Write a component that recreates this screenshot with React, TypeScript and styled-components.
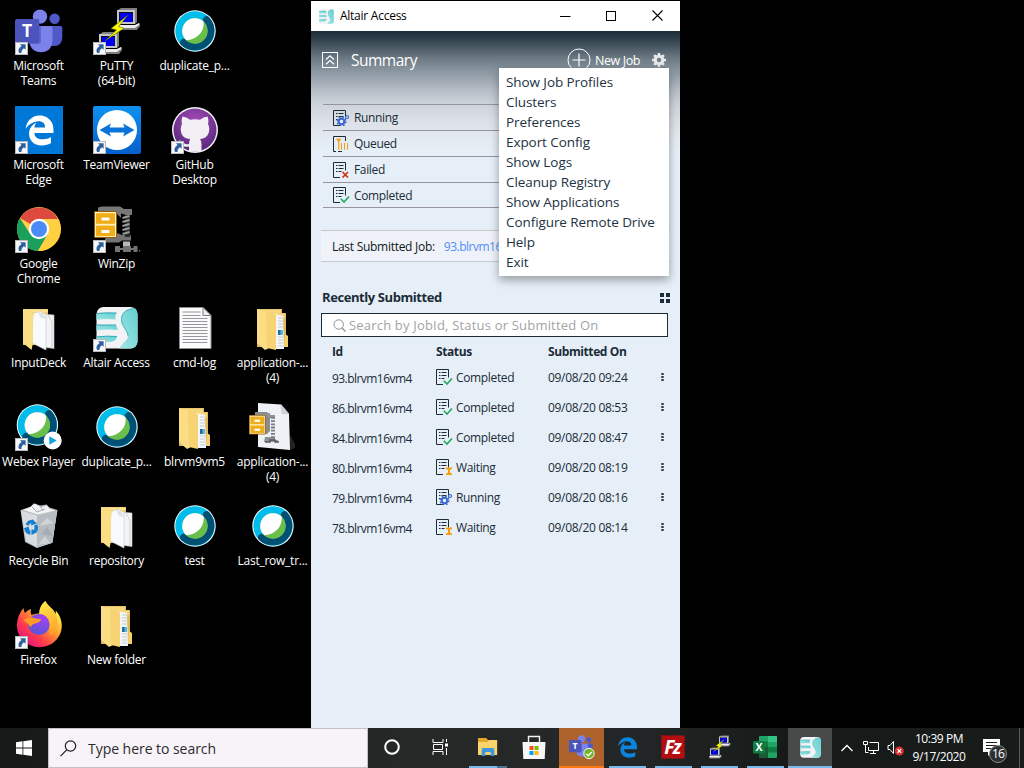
import React from 'react';
import styled, { createGlobalStyle, css } from 'styled-components';
import { FaEdgeLegacy } from 'react-icons/fa';

const GlobalStyle = createGlobalStyle`
  *, *::before, *::after { box-sizing: border-box; }
  html, body { margin: 0; padding: 0; background: #000; overflow: hidden; }
  body { font-family: "Open Sans", "Noto Sans", sans-serif; font-size: 12px; }
  svg { display: block; }
`;

/* ---------- Desktop ---------- */

const Screen = styled.div`
  width: 1024px;
  height: 768px;
  display: flex;
  flex-direction: column;
  background: #000;
  overflow: hidden;
`;

const Desktop = styled.main`
  position: relative;
  flex: 1;
  min-height: 0;
`;

const IconGrid = styled.div`
  display: grid;
  grid-template-columns: repeat(4, 78px);
  grid-auto-rows: 99px;
  padding-top: 7px;
`;

const Shortcut = styled.div<{ $col: number; $row: number }>`
  grid-column: ${(p) => p.$col};
  grid-row: ${(p) => p.$row};
  display: flex;
  flex-direction: column;
  align-items: center;
  color: #fff;
`;

const ShortcutPicture = styled.div`
  position: relative;
  width: 48px;
  height: 48px;
`;

const LinkBadge = styled.svg`
  position: absolute;
  left: 0;
  bottom: 0;
`;

const ShortcutLabel = styled.div`
  margin-top: 3px;
  padding-right: 1px;
  font-size: 12px;
  line-height: 15px;
  letter-spacing: -0.25px;
  text-align: center;
  white-space: pre;
`;

const ArrowBadge = () => (
  <LinkBadge width="13" height="13" viewBox="0 0 13 13">
    <rect x="0.5" y="0.5" width="12" height="12" fill="#f8f8fa" stroke="#b9b9bd" />
    <path d="M5 2.3h5.600v5.500L8.900 6.200C7.300 7.500 6.300 8.800 6.500 11H4.200C2.600 8.200 4 5.700 6.600 4z" fill="#2c5f9e" />
  </LinkBadge>
);

const TeamsLogo = ({ size = 48 }: { size?: number }) => (
  <svg width={size} height={size} viewBox="0 0 48 48">
    <circle cx="39.600" cy="11.700" r="5.200" fill="#5059c9" />
    <path d="M35 19h10.500q1.800 0 1.800 1.800V30c0 6-3.500 9-8 9h-4z" fill="#5059c9" />
    <circle cx="25" cy="9.600" r="7.200" fill="#7b83eb" />
    <path d="M14 19h21.500q2 0 2 2v12c0 8-5 12.300-11.500 12.300S14.500 41 14 33z" fill="#7b83eb" />
    <path d="M14 19h12v15q0 3-3 3h-8.600z" fill="#5f67cf" />
    <rect x="0" y="12" width="24.300" height="24.300" rx="2" fill="#4b53bc" />
    <text x="12.100" y="30.300" textAnchor="middle" fontFamily="Open Sans, sans-serif" fontWeight="700" fontSize="17.500" fill="#fff">T</text>
  </svg>
);

const PuttyLogo = ({ size = 48 }: { size?: number }) => {
  const computer = (
    <>
      <path d="M1 2L4 0H20V14L18 16H1z" fill="#808080" />
      <rect x="0" y="2" width="18" height="14" fill="#c6c6c6" />
      <rect x="2" y="4" width="14" height="10" fill="#101010" />
      <rect x="3" y="5" width="12.500" height="9" fill="#0000f0" />
      <path d="M-1 17h19l5-2v3l-3 4H-1z" fill="#7c7c7c" />
      <path d="M-1 17h19l4-2v2l-4 3H-1z" fill="#ececec" />
    </>
  );
  return (
    <svg width={size} height={size} viewBox="0 0 48 48">
      <g transform="translate(24 1)">{computer}</g>
      <g transform="translate(6 25)">{computer}</g>
      <path d="M34.500 8.500L18 21.500l5.500 1.500L12.500 33.500 31 21.300l-5.500-1.600z" fill="#ffff00" stroke="#6c6c00" strokeWidth="0.700" />
    </svg>
  );
};

const WebexMark = () => (
  <>
    <circle r="20.700" fill="#fff" />
    <circle r="16.200" fill="none" stroke="#00bceb" strokeWidth="7" />
    <path d="M11.500 -11.400A16.200 16.200 0 0 1 -11.500 11.400" fill="none" stroke="#005073" strokeWidth="7" strokeLinecap="round" />
    <circle r="12.700" fill="#6abf4b" />
    <path d="M8.700 -9.300A12.700 12.700 0 1 0 -8.700 9.300C2 8.500 9.500 1 8.700 -9.300z" fill="#fff" />
  </>
);

const WebexLogo = () => (
  <svg width="48" height="48" viewBox="0 0 48 48"><g transform="translate(24 24)"><WebexMark /></g></svg>
);

const WebexPlayerLogo = () => (
  <svg width="48" height="48" viewBox="0 0 48 48">
    <g transform="translate(22.400 22)"><WebexMark /></g>
    <circle cx="37.700" cy="37.500" r="9" fill="#fff" />
    <path d="M34.300 33.300l7.400 4.200-7.400 4.200z" fill="#0aa5e0" />
  </svg>
);

const EdgeTile = styled.div`
  width: 48px;
  height: 48px;
  display: flex;
  align-items: center;
  justify-content: center;
  background: #0078d7;
  color: #fff;
  font-size: 31px;
`;

const TeamViewerLogo = () => (
  <svg width="48" height="48" viewBox="0 0 48 48">
    <defs>
      <linearGradient id="tv" x1="0" y1="0" x2="0" y2="1"><stop offset="0" stopColor="#0d92f0" /><stop offset="1" stopColor="#0560cc" /></linearGradient>
    </defs>
    <rect width="48" height="48" rx="2" fill="url(#tv)" />
    <circle cx="24" cy="24" r="20" fill="#fff" />
    <path d="M6.500 24L18 17.500l-1.500 4h15L30 17.500 41.500 24 30 30.500l1.500-4h-15l1.500 4z" fill="#0a72d8" />
  </svg>
);

const GithubLogo = () => (
  <svg width="48" height="48" viewBox="0 0 48 48">
    <defs>
      <radialGradient id="gh" cx="0.500" cy="0.300" r="0.700"><stop offset="0" stopColor="#a34bb5" /><stop offset="1" stopColor="#57287d" /></radialGradient>
      <clipPath id="ghc"><circle cx="24" cy="24" r="21.800" /></clipPath>
    </defs>
    <circle cx="24" cy="24" r="23" fill="#f2eff5" />
    <circle cx="24" cy="24" r="21.500" fill="url(#gh)" />
    <path clipPath="url(#ghc)" d="M11.500 10.500q4 .5 7.500 3.200 5-1 10 0 3.500-2.700 7.500-3.200 1.500 4 .5 7.500 1.500 2.500 1.200 6c-.5 6-4 8.500-9.200 9q1.500 2 1.500 5V48H18v-7.500c-6 1-6.500-1.500-8-3.500q-1.500-1.500-2.500-2.300 3.500-1 5.500 2.300 1.800 2 5 1 0-3 1.200-5c-6-.5-9-3-9.400-9q-.3-3.500 1.200-6-1-3.500.5-7.500z" fill="#f1eff3" />
  </svg>
);

const ChromeLogo = () => (
  <svg width="48" height="48" viewBox="0 0 48 48">
    <circle cx="24" cy="24" r="22" fill="#ffd040" />
    <path d="M24 24L4.900 13A22 22 0 0 1 43.100 14H24z" fill="#de4b3e" />
    <path d="M4.900 13A22 22 0 0 0 23 46L33.500 28 24 24 14.500 28z" fill="#1a9f5c" />
    <path d="M24 14H43.100A22 22 0 0 1 23 46L33 29z" fill="#ffd040" />
    <circle cx="24" cy="24" r="10.200" fill="#fff" />
    <circle cx="24" cy="24" r="8" fill="#4a8bf5" />
  </svg>
);

const Cabinet = () => (
  <>
    <rect x="0" y="0" width="23" height="27" rx="1" fill="#8f5f0c" />
    <rect x="1" y="1" width="21" height="25" fill="#fff0c0" />
    <rect x="2" y="2.200" width="19" height="10.600" fill="#efad19" />
    <rect x="2" y="14.600" width="19" height="10.600" fill="#efad19" />
    <rect x="7.500" y="6.500" width="8" height="3" fill="#fff" />
    <rect x="7.500" y="19" width="8" height="3" fill="#fff" />
  </>
);

const WinZipLogo = () => (
  <svg width="48" height="48" viewBox="0 0 48 48">
    <path d="M5 2.500L9 1.500h18l4 2.500h8v6h-6l-5-1.500V13l-4-4H5z" fill="#777" />
    <path d="M24 28l5 2 9 .5v5h-9l-3 2H12v-4z" fill="#737373" />
    <path d="M32 10h5v22h-5z" fill="#2c2c2c" />
    <path d="M29.500 13l7-2M29.500 17l7-2M29.500 21l7-2M29.500 25l7-2M29.500 29l7-2" stroke="#9d9d9d" strokeWidth="2" />
    <rect x="30" y="36.500" width="7" height="4.500" fill="#b9b9b9" />
    <path d="M22 41h5v2h3v-2h8v2h2.500v-2h4v6h-4v-2H38v2h-8v-2h-3v2h-5zM46 45h1.200v1.500H46z" fill="#737373" />
    <g transform="translate(1 6)"><Cabinet /></g>
  </svg>
);

const WinZipFile = () => (
  <svg width="48" height="48" viewBox="0 0 48 48">
    <path d="M40 30l6 11q2 5-6 6z" fill="#222" />
    <path d="M9 0l23 1.500 8 9.500L41 47 9 44z" fill="#eef2f6" />
    <path d="M32 1.500l8 9.500-7-.5z" fill="#d0d5dc" stroke="#b4bac0" strokeWidth="0.500" />
    <path d="M6 9h12l3 3v16l-3 3H6z" fill="#8c8c8c" />
    <path d="M17 10h4v2h5v3h-6zM16 34h10v3h3v2H15z" fill="#8e9398" />
    <path d="M24 14v21" stroke="#777d83" strokeWidth="4" strokeDasharray="1.800 1.400" />
    <path d="M16 39h5v-2h5v2h4" stroke="#565b60" strokeWidth="1.500" fill="none" />
    <g transform="translate(0 12) scale(.72)"><Cabinet /></g>
  </svg>
);

const PaperFolder = () => (
  <svg width="48" height="48" viewBox="0 0 48 48">
    <path d="M8 5h25v36H8z" fill="#e6c565" />
    <path d="M8 5.500h24.500v3H20z" fill="#fbe190" />
    <path d="M26 10l13 1v33.500L27 43z" fill="#f2f3f5" stroke="#c8cacf" strokeWidth="0.600" />
    <path d="M18 9l8-1.500 5 3V46L17 39z" fill="#f9fafc" stroke="#c8cacf" strokeWidth="0.600" />
    <path d="M23 8l5 1 3 6-5-1z" fill="#dfe2e6" />
    <path d="M33 11l4 7v26" stroke="#b9bcc2" strokeWidth="0.600" fill="none" />
    <path d="M8 5l12 4q-2 2-2 5v25l-1.500 7L8 39z" fill="#fbdd84" />
  </svg>
);

const FilesFolder = () => (
  <svg width="48" height="48" viewBox="0 0 48 48">
    <path d="M8 5h25v4h4v34H8z" fill="#dfb95a" />
    <path d="M9 5.500h23v4h4v5H13z" fill="#f6d67d" />
    <path d="M25 10l9 2 1 33H26z" fill="#f3f6f9" />
    <path d="M29 14h5M29 17h5M29 20h5M29 23h5M29 33h5M29 36h5M29 39h5M29 42h5" stroke="#c3cbd2" strokeWidth="1" />
    <path d="M29 26h5v5h-5z" fill="#5db6e0" />
    <path d="M29 26h2.500v5H29z" fill="#226d9c" />
    <path d="M8 5l12 4v35l-4 2-8-7z" fill="#fbdd84" />
    <path d="M17 8l10 3v35l-9-2z" fill="#f7d374" />
    <path d="M36 30l3 2v11h-4z" fill="#f3cf6d" />
  </svg>
);

const AltairLogo = ({ size = 48, uid }: { size?: number; uid: string }) => (
  <svg width={size} height={size} viewBox={size < 48 ? '3 3 42 42' : '0 0 48 48'}>
    <defs>
      <linearGradient id={uid} x1="1" y1="0" x2="0" y2="1"><stop offset="0" stopColor="#5fcfd0" /><stop offset="1" stopColor="#a4e7e6" /></linearGradient>
      <clipPath id={`${uid}c`}><rect x="3.500" y="3" width="41" height="41.500" rx="7" /></clipPath>
    </defs>
    <g clipPath={`url(#${uid}c)`}>
      <rect x="3" y="3" width="42" height="42" fill="#f3f2f4" />
      <path d="M3 9.500q10-1 20.500-.5-2 3-1 6.500-9-1-19.500.5z" fill={`url(#${uid})`} />
      <path d="M3 21h20q1 2.500 2 5-10-1-22 .5z" fill={`url(#${uid})`} />
      <path d="M3 33q12-1.500 21-.5-1 4.500-6 5.500-7-.5-15 1z" fill={`url(#${uid})`} />
      <path d="M3 9.500q10-1 20.500-.5M3 21h20M3 33q12-1.500 21-.5" stroke="#31a9b6" strokeWidth="1" fill="none" />
      <path d="M45 4c-12 0-16.500 5-16.500 11.500 0 7 6.500 11 6.500 16.500 0 5-6 6.500-9 13H45z" fill={`url(#${uid})`} />
      <path d="M41 4.500c-9 1-12.500 5-12.500 11 0 7 6.500 11 6.500 16.500" fill="none" stroke="#38aab5" strokeWidth="0.900" />
    </g>
  </svg>
);

const TextFile = () => (
  <svg width="48" height="48" viewBox="0 0 48 48">
    <path d="M8.500 3.500h23.500l8 8v33h-31.500z" fill="#fbfbfc" stroke="#8e8e92" strokeWidth="1" />
    <path d="M32 3.500v8h8z" fill="#eee" stroke="#7e7e84" strokeWidth="1" />
    <path d="M11.500 8h18M11.500 11.500h18M11.500 14.500h25M11.500 17.500h25M11.500 20.500h25M11.500 23.500h25M11.500 26.500h25M11.500 29.500h25M11.500 32.500h25M11.500 35.500h25M11.500 38.500h25" stroke="#96989d" strokeWidth="1" />
  </svg>
);

const RecycleBin = () => (
  <svg width="48" height="48" viewBox="0 0 48 48">
    <path d="M5.500 8l10-3 3-3.500 7 2 6-1 3 3 8 2.500-5.500 33-15 5-12-6z" fill="#b4b9bf" />
    <path d="M6 8.500l16 5 20-5-4.500 32-15.500 5L11 39z" fill="#d9dde1" />
    <path d="M22 13.500l20-5-4.500 32-15.500 5z" fill="#b7bcc2" />
    <path d="M8 8l8-3.500 4-3 6 4 6-2 2 3 6 2-17 4z" fill="#f2f3f5" />
    <path d="M17 5l5 5 8-3M26 5l2 4" stroke="#a6abb1" strokeWidth="1" fill="none" />
    <path d="M24 24l8-8 7 5zM23 43l7-9 5 7z" fill="#cfd3d7" />
    <path d="M26 32l6-7 6 9z" fill="#a7adb3" />
    <g fill="none" stroke="#1680cf" strokeWidth="3.400">
      <path d="M12 23q2.500-4.500 6-3" /><path d="M20.500 23q2 4-1 6.500" /><path d="M15.500 31q-4-.5-4.500-4.500" />
    </g>
    <path d="M17 17l5 4.500-6 2zM22.500 30l-6 3v-6zM8.500 26.500l5-2 1.500 5z" fill="#1680cf" />
  </svg>
);

const FirefoxLogo = () => (
  <svg width="48" height="48" viewBox="0 0 48 48">
    <defs>
      <linearGradient id="ff" x1="0.900" y1="0.100" x2="0.200" y2="0.900"><stop offset="0.100" stopColor="#fff04a" /><stop offset="0.450" stopColor="#ff9a2e" /><stop offset="0.750" stopColor="#ff3c4c" /><stop offset="1" stopColor="#e5177b" /></linearGradient>
      <linearGradient id="fy" x1="0" y1="0" x2="0.300" y2="1"><stop offset="0" stopColor="#fff14c" /><stop offset="1" stopColor="#ffa52b" /></linearGradient>
      <radialGradient id="fp" cx="0.700" cy="0.200" r="0.800"><stop offset="0" stopColor="#a640f0" /><stop offset="1" stopColor="#5b55d8" /></radialGradient>
    </defs>
    <path d="M30.500 0c1.500 5 8 7.500 10 13q.5-1.500.3-3.500c4 4.500 6 10 6 15C46.800 37 36.500 46.200 24.500 46.200S2 36.500 2 25c0-7 2-12.500 6.500-18q.2 3 1.500 5 2.500-3 6-4-1 3 .5 6 4-2 8-1.500 0-8 6-12.500z" fill="url(#ff)" />
    <path d="M30.500 0c1.500 5 8 7.500 10 13 4 8 1 18-6 21.500 2-9-2-15-10-20.500-1-6 2-11 6-14z" fill="url(#fy)" />
    <circle cx="24" cy="23.500" r="10.600" fill="url(#fp)" />
    <path d="M8 19q4-3 9-2.500 5 1.500 9 1.500 0 3-6 4.500-4 1-4 4-3-5-8-7.500z" fill="#ff9a25" />
  </svg>
);

interface DesktopItem { label: string; col: number; row: number; icon: React.ReactNode; link?: boolean }

const desktopItems: DesktopItem[] = [
  { label: 'Microsoft\nTeams', col: 1, row: 1, icon: <TeamsLogo />, link: true },
  { label: 'PuTTY\n(64-bit)', col: 2, row: 1, icon: <PuttyLogo />, link: true },
  { label: 'duplicate_p...', col: 3, row: 1, icon: <WebexLogo /> },
  { label: 'Microsoft\nEdge', col: 1, row: 2, icon: <EdgeTile><FaEdgeLegacy /></EdgeTile>, link: true },
  { label: 'TeamViewer', col: 2, row: 2, icon: <TeamViewerLogo />, link: true },
  { label: 'GitHub\nDesktop', col: 3, row: 2, icon: <GithubLogo />, link: true },
  { label: 'Google\nChrome', col: 1, row: 3, icon: <ChromeLogo />, link: true },
  { label: 'WinZip', col: 2, row: 3, icon: <WinZipLogo />, link: true },
  { label: 'InputDeck', col: 1, row: 4, icon: <PaperFolder /> },
  { label: 'Altair Access', col: 2, row: 4, icon: <AltairLogo uid="altair-desktop" />, link: true },
  { label: 'cmd-log', col: 3, row: 4, icon: <TextFile /> },
  { label: 'application-...\n(4)', col: 4, row: 4, icon: <FilesFolder /> },
  { label: 'Webex Player', col: 1, row: 5, icon: <WebexPlayerLogo />, link: true },
  { label: 'duplicate_p...', col: 2, row: 5, icon: <WebexLogo /> },
  { label: 'blrvm9vm5', col: 3, row: 5, icon: <FilesFolder /> },
  { label: 'application-...\n(4)', col: 4, row: 5, icon: <WinZipFile /> },
  { label: 'Recycle Bin', col: 1, row: 6, icon: <RecycleBin /> },
  { label: 'repository', col: 2, row: 6, icon: <PaperFolder /> },
  { label: 'test', col: 3, row: 6, icon: <WebexLogo /> },
  { label: 'Last_row_tr...', col: 4, row: 6, icon: <WebexLogo /> },
  { label: 'Firefox', col: 1, row: 7, icon: <FirefoxLogo />, link: true },
  { label: 'New folder', col: 2, row: 7, icon: <FilesFolder /> },
];

/* ---------- Application window ---------- */

const AppWindow = styled.section`
  position: absolute;
  left: 311px;
  top: 1px;
  width: 369px;
  height: 727px;
  display: flex;
  flex-direction: column;
  background: #e6eff7;
  color: #1b2b38;
`;

const TitleBar = styled.header`
  height: 30px;
  flex: none;
  display: flex;
  align-items: center;
  padding-left: 8px;
  background: #fff;
  color: #000;
`;

const TitleText = styled.span`
  flex: 1;
  padding-left: 5px;
  font-size: 12px;
  line-height: 16px;
  letter-spacing: -0.25px;
`;

const WindowControl = styled.button`
  width: 46px;
  height: 30px;
  padding: 0 0 1px;
  border: 0;
  background: none;
  display: flex;
  align-items: center;
  justify-content: center;
`;

const SummaryPanel = styled.div`
  flex: none;
  height: 199px;
  padding: 0 11px 0 12px;
  background: linear-gradient(#1c2e39 0, #2c3d48 7px, #6b7983 27px, #8f9aa4 42px, #b1b9c2 57px, #ccd2d9 72px, #dadfe6 88px, #e3e8ef 102px, #e6eff7 120px);
`;

const SummaryBar = styled.div`
  height: 73px;
  display: flex;
  align-items: center;
  padding-bottom: 15px;
  padding-right: 3px;
  margin-left: -1px;
  color: #fff;
`;

const SummaryTitle = styled.h1`
  flex: 1;
  margin: -1px 0 0 13px;
  font-size: 15.5px;
  line-height: 20px;
  font-weight: 400;
  letter-spacing: -0.5px;
`;

const NewJob = styled.span`
  margin: 0 12px 0 4px;
  font-size: 12.500px;
  letter-spacing: -0.400px;
`;

const StatusList = styled.ul`
  margin: 0;
  padding: 0;
  list-style: none;
  border-bottom: 1px solid #97959c;
`;

const StatusRow = styled.li`
  height: 26px;
  display: flex;
  align-items: center;
  gap: 4px;
  padding-left: 10px;
  border-top: 1px solid #97959c;
  font-size: 12px;
  letter-spacing: -0.350px;
  &:last-child { height: 25px; }
`;

const LastJob = styled.div`
  flex: none;
  height: 32px;
  margin: 0 10px;
  padding: 0 11px;
  display: flex;
  align-items: center;
  gap: 9px;
  border: solid #c6c8cc;
  border-width: 1px 0;
  background: #eff2f8;
  color: #101820;
  letter-spacing: -0.280px;
`;

const JobLink = styled.a`
  color: #5090fb;
  letter-spacing: -0.5px;
`;

const RecentHeader = styled.div`
  flex: none;
  height: 51px;
  display: flex;
  align-items: flex-end;
  justify-content: space-between;
  padding: 0 10px 7px 11px;
`;

const RecentTitle = styled.h2`
  margin: 0;
  font-size: 13px;
  line-height: 18px;
  font-weight: 700;
  letter-spacing: -0.420px;
`;

const TileToggle = styled.span`
  display: grid;
  grid-template-columns: 4px 4px;
  grid-auto-rows: 4px;
  gap: 2px;
  margin-bottom: 3px;
  i { background: #1b2b38; }
`;

const SearchField = styled.div`
  flex: none;
  height: 24px;
  margin: 0 12px 0 10px;
  padding-left: 11px;
  display: flex;
  align-items: center;
  gap: 3px;
  border: 1px solid #1b2b38;
  background: #fff;
  color: #a3a3a5;
  font-size: 13px;
  letter-spacing: 0.190px;
`;

const JobTable = styled.div`
  flex: none;
`;

const rowColumns = css`
  display: grid;
  grid-template-columns: 104px 112px 108px 1fr;
  align-items: center;
  padding: 0 11px 0 21px;
`;

const JobTableHead = styled.div`
  ${rowColumns}
  height: 25px;
  padding-top: 4px;
  font-weight: 700;
  letter-spacing: -0.400px;
`;

const JobTableRow = styled.div`
  ${rowColumns}
  height: 30px;
`;

const JobId = styled.span`
  padding-top: 2px;
  letter-spacing: -0.550px;
`;

const JobStatus = styled.span`
  display: flex;
  align-items: center;
  gap: 3px;
  letter-spacing: -0.350px;
`;

const JobDate = styled.span`
  letter-spacing: -0.300px;
`;

const MoreDots = styled.span`
  width: 3px;
  display: grid;
  gap: 1px;
  justify-self: center;
  i { height: 2px; border-radius: 1px; background: #33414c; }
`;

const SettingsMenu = styled.ul`
  position: absolute;
  left: 188px;
  top: 67px;
  width: 170px;
  height: 208px;
  margin: 0;
  padding: 4px 0 0 7px;
  list-style: none;
  background: #fff;
  box-shadow: 0 4px 9px rgba(0, 0, 0, 0.350);
`;

const MenuItem = styled.li`
  height: 20px;
  line-height: 20px;
  font-size: 13.500px;
  letter-spacing: -0.080px;
  white-space: nowrap;
  color: #22323f;
`;

type Status = 'Running' | 'Queued' | 'Failed' | 'Completed' | 'Waiting';

const marks: Record<Status, React.ReactNode> = {
  Running: (
    <>
      <circle cx="8.500" cy="11.500" r="2.800" fill="#e6eff7" stroke="#3b68d0" strokeWidth="2" />
      <circle cx="8.500" cy="11.500" r="4.300" fill="none" stroke="#3b68d0" strokeWidth="1.500" strokeDasharray="1.700 1.680" />
      <circle cx="14" cy="7" r="1.500" fill="none" stroke="#3b68d0" strokeWidth="1.200" />
    </>
  ),
  Queued: (
    <path d="M3 2.800h5.500L6.300 5.500v8.200H5.200V5.500zM8 7h1v6.700H8zM11 7h1v6.700h-1zM14 7h1v6.700h-1z" fill="#f79a0c" />
  ),
  Failed: <path d="M9.500 10l5.500 5.500M15 10l-5.500 5.500" stroke="#cf2d0c" strokeWidth="1.600" fill="none" />,
  Completed: <path d="M7.800 11.800l3.200 3.200 5-5.500" stroke="#1da65c" strokeWidth="1.600" fill="none" />,
  Waiting: <path d="M10 8.500h6V10l-2 .8v3l2 .7V16h-6v-1.500l2-.7v-3l-2-.8z" fill="#f99b0c" />,
};

const StatusIcon = ({ status }: { status: Status }) => {
  const queued = status === 'Queued';
  return (
    <svg width="17" height="16" viewBox="0 0 17 16">
      <path d={queued ? 'M3 15.500H.5V.5h12V5M5 15.500h4' : 'M7 15.500H.5V.5h12V8.500'} stroke="#1b2b38" fill="none" />
      {!queued && <path d="M3 3.500h1.500M5.500 3.500h5M3 6.500h1.500M5.500 6.500h5M3 9.500h1.500M5.500 9.500h3" stroke="#1b2b38" />}
      {marks[status]}
    </svg>
  );
};

const summary: Status[] = ['Running', 'Queued', 'Failed', 'Completed'];

const jobs: { id: string; status: Status; date: string }[] = [
  { id: '93.blrvm16vm4', status: 'Completed', date: '09/08/20 09:24' },
  { id: '86.blrvm16vm4', status: 'Completed', date: '09/08/20 08:53' },
  { id: '84.blrvm16vm4', status: 'Completed', date: '09/08/20 08:47' },
  { id: '80.blrvm16vm4', status: 'Waiting', date: '09/08/20 08:19' },
  { id: '79.blrvm16vm4', status: 'Running', date: '09/08/20 08:16' },
  { id: '78.blrvm16vm4', status: 'Waiting', date: '09/08/20 08:14' },
];

const menuItems = [
  'Show Job Profiles', 'Clusters', 'Preferences', 'Export Config', 'Show Logs',
  'Cleanup Registry', 'Show Applications', 'Configure Remote Drive', 'Help', 'Exit',
];

const GearIcon = () => (
  <svg width="14" height="14" viewBox="-7 -7 14 14">
    <circle r="3.800" fill="none" stroke="#e6e8ea" strokeWidth="3.200" />
    {[0, 45, 90, 135].map((a) => (
      <path key={a} transform={`rotate(${a})`} d="M0 -7v3M0 4v3" stroke="#e6e8ea" strokeWidth="2.400" />
    ))}
  </svg>
);

const AltairAccess = () => (
  <AppWindow>
    <TitleBar>
      <AltairLogo size={15} uid="altair-title" />
      <TitleText>&#8202;Altair Access</TitleText>
      <WindowControl><svg width="11" height="10"><path d="M0 5.500h10.500" stroke="#000" /></svg></WindowControl>
      <WindowControl><svg width="10" height="10"><rect x="0.500" y="0.500" width="9" height="9" fill="none" stroke="#000" /></svg></WindowControl>
      <WindowControl><svg width="11" height="11"><path d="M.5.5l10 10M10.500.5l-10 10" stroke="#000" strokeWidth="1.100" /></svg></WindowControl>
    </TitleBar>
    <SummaryPanel>
      <SummaryBar>
        <svg width="16" height="16" viewBox="0 0 16 16">
          <rect x="0.500" y="0.500" width="15" height="15" fill="none" stroke="#fff" />
          <path d="M4 7.500l4-3.700 4 3.700M4 12.200l4-3.700 4 3.700" fill="none" stroke="#fff" strokeWidth="1.200" />
        </svg>
        <SummaryTitle>Summary</SummaryTitle>
        <svg width="24" height="24" viewBox="0 0 24 24">
          <circle cx="12" cy="12" r="11" fill="none" stroke="#fff" />
          <path d="M12 5.500v13M5.500 12h13" stroke="#fff" strokeWidth="1.200" />
        </svg>
        <NewJob>New Job</NewJob>
        <GearIcon />
      </SummaryBar>
      <StatusList>
        {summary.map((s) => (
          <StatusRow key={s}><StatusIcon status={s} />{s}</StatusRow>
        ))}
      </StatusList>
    </SummaryPanel>
    <LastJob>Last Submitted Job:<JobLink>93.blrvm16vm4</JobLink></LastJob>
    <RecentHeader>
      <RecentTitle>Recently Submitted</RecentTitle>
      <TileToggle><i /><i /><i /><i /></TileToggle>
    </RecentHeader>
    <SearchField>
      <svg width="13" height="13" viewBox="0 0 13 13" fill="none" stroke="#8f8f93">
        <circle cx="5.700" cy="5.500" r="4.700" /><path d="M9 9l3.500 3.500" strokeWidth="1.200" />
      </svg>
      Search by JobId, Status or Submitted On
    </SearchField>
    <JobTable>
      <JobTableHead><span>Id</span><span>Status</span><span>Submitted On</span></JobTableHead>
      {jobs.map((j) => (
        <JobTableRow key={j.id}>
          <JobId>{j.id}</JobId>
          <JobStatus><StatusIcon status={j.status} />{j.status}</JobStatus>
          <JobDate>{j.date}</JobDate>
          <MoreDots><i /><i /><i /></MoreDots>
        </JobTableRow>
      ))}
    </JobTable>
    <SettingsMenu>
      {menuItems.map((m) => <MenuItem key={m}>{m}</MenuItem>)}
    </SettingsMenu>
  </AppWindow>
);

/* ---------- Taskbar ---------- */

const Taskbar = styled.footer`
  flex: none;
  height: 40px;
  display: flex;
  background: linear-gradient(90deg, #151a19, #262928 42%, #232626 62%, #161b19 76%, #171b19);
  color: #fff;
`;

const StartButton = styled.div`
  width: 48px;
  display: flex;
  align-items: center;
  justify-content: center;
`;

const TaskSearch = styled.div`
  width: 320px;
  display: flex;
  align-items: center;
  gap: 11px;
  padding-left: 11px;
  border: 1px solid #c3c1c4;
  background: #f7f3f8;
  color: #2b2b2e;
  font-size: 14px;
  letter-spacing: -0.040px;
`;

const TaskSlot = styled.div<{ $w: number; $tile?: string }>`
  width: ${(p) => p.$w}px;
  height: 40px;
  display: grid;
  grid-template-rows: 38px 2px;
  align-items: center;
  justify-items: center;
  background: ${(p) => p.$tile ?? 'transparent'};
  font-size: 24px;
`;

const Underline = styled.span<{ $w: number; $color?: string }>`
  width: ${(p) => p.$w}px;
  height: 2px;
  background: ${(p) => p.$color ?? '#76b9ed'};
`;

const EdgeMark = styled(FaEdgeLegacy)`
  color: #0a84de;
  font-size: 21px;
  margin-top: 1px;
`;

const Tray = styled.div`
  flex: 1;
  display: flex;
  align-items: center;
  padding-left: 9px;
`;

const Clock = styled.div`
  width: 60px;
  margin: 0 14px 0 4px;
  text-align: center;
  font-size: 12px;
  line-height: 18px;
  letter-spacing: -0.450px;
  white-space: nowrap;
`;

const Notifications = styled.div`
  position: relative;
  width: 26px;
  height: 20px;
`;

const NotificationCount = styled.span`
  position: absolute;
  left: 6px;
  top: 7px;
  width: 18px;
  height: 18px;
  border: 1px solid #8b8f8f;
  border-radius: 50%;
  background: #2c3030;
  font-size: 12px;
  line-height: 16px;
  text-align: center;
  letter-spacing: -0.800px;
`;

const ShowDesktop = styled.div`
  width: 5px;
  height: 40px;
  margin-left: auto;
  border-left: 1px solid #5a5d5d;
`;

const App = () => (
  <Screen>
    <GlobalStyle />
    <Desktop>
      <IconGrid>
        {desktopItems.map((d) => (
          <Shortcut key={`${d.col}-${d.row}`} $col={d.col} $row={d.row}>
            <ShortcutPicture>{d.icon}{d.link && <ArrowBadge />}</ShortcutPicture>
            <ShortcutLabel>{d.label}</ShortcutLabel>
          </Shortcut>
        ))}
      </IconGrid>
      <AltairAccess />
    </Desktop>
    <Taskbar>
      <StartButton>
        <svg width="16" height="16" viewBox="0 0 16 16" fill="#fff"><path d="M0 2.200l6.500-.9v6.300H0zM7.300 1.200L16 0v7.600H7.300zM0 8.400h6.500v6.300L0 13.800zM7.300 8.400H16V16l-8.700-1.200z" /></svg>
      </StartButton>
      <TaskSearch>
        <svg width="17" height="17" viewBox="0 0 17 17" fill="none" stroke="#1c1c1e" strokeWidth="1.200"><circle cx="10.500" cy="6" r="5.200" /><path d="M6.700 9.800L.5 16.200" /></svg>
        <span>Type here to search</span>
      </TaskSearch>
      <TaskSlot $w={48}>
        <svg width="16" height="16"><circle cx="8" cy="8" r="6.800" fill="none" stroke="#fff" strokeWidth="2" /></svg>
      </TaskSlot>
      <TaskSlot $w={48}>
        <svg width="17" height="16" viewBox="0 0 17 16" fill="none" stroke="#fff"><path d="M1 0v3.500h10V0M1.500 5.500h9v5h-9zM1 16v-3.500h10V16M14.500 0v3M14.500 9v7" /><path d="M13 6h3" strokeWidth="3" /></svg>
      </TaskSlot>
      <TaskSlot $w={48}>
        <svg width="20" height="18" viewBox="0 0 22 18" preserveAspectRatio="none"><path d="M0 0h9l2 2h10v15H0z" fill="#e3a92e" /><path d="M0 4h11l1-2h9v15H0z" fill="#f9d46d" /><path d="M4 18v-6q0-2 2-2h10q2 0 2 2v6h-4v-4H8v4z" fill="#3b97dc" /></svg>
        <Underline $w={38} $color="linear-gradient(90deg, #76b9ed 28px, #48708f 28px)" />
      </TaskSlot>
      <TaskSlot $w={47}>
        <svg width="28" height="24" viewBox="0 0 28 24"><path d="M6.500 8V1.500h11V8" fill="none" stroke="#f3f3f3" strokeWidth="1.400" /><path d="M.5 7h23l-.8 17H1.300z" fill="#f6f6f7" /><path d="M7.500 11h4v4h-4z" fill="#f25022" /><path d="M12.500 11h4v4h-4z" fill="#7fba00" /><path d="M7.500 16h4v4h-4z" fill="#00a4ef" /><path d="M12.500 16h4v4h-4z" fill="#ffb900" /></svg>
      </TaskSlot>
      <TaskSlot $w={45} $tile="#af632c">
        <svg width="26" height="26" viewBox="0 0 26 26">
          <TeamsLogo size={24} />
          <circle cx="20" cy="19.500" r="5.200" fill="#71b52b" stroke="#f7f8f4" />
          <path d="M17.300 19.700l2 2 3.400-3.700" fill="none" stroke="#fff" strokeWidth="1.300" />
        </svg>
        <Underline $w={45} $color="#ff7a0c" />
      </TaskSlot>
      <TaskSlot $w={46}><EdgeMark /><Underline $w={37} /></TaskSlot>
      <TaskSlot $w={46}>
        <svg width="24" height="24" viewBox="0 0 24 24">
          <rect x="1" y="1" width="22" height="22" fill="#b30d10" stroke="#b30d10" strokeWidth="2" strokeDasharray="1.500 1" />
          <text x="11" y="19" textAnchor="middle" fontFamily="Open Sans, sans-serif" fontStyle="italic" fontWeight="700" fontSize="19" letterSpacing="-1.500" fill="#fff">Fz</text>
        </svg>
        <Underline $w={37} />
      </TaskSlot>
      <TaskSlot $w={46}><PuttyLogo size={24} /><Underline $w={37} /></TaskSlot>
      <TaskSlot $w={46}>
        <svg width="24" height="22" viewBox="0 0 24 22">
          <rect x="6" y="0" width="18" height="22" rx="1" fill="#21a366" /><path d="M15 0h8q1 0 1 1v5h-9z" fill="#33c481" /><path d="M6 11h9v11H7q-1 0-1-1z" fill="#185c37" /><path d="M15 11h9v5.500h-9z" fill="#107c41" /><path d="M6 5.500h9V11H6z" fill="#107c41" />
          <rect x="0" y="5" width="12" height="12.500" rx="1" fill="#107c41" />
          <text x="6" y="15" textAnchor="middle" fontFamily="Open Sans, sans-serif" fontWeight="700" fontSize="10.500" fill="#fff">X</text>
        </svg>
        <Underline $w={37} />
      </TaskSlot>
      <TaskSlot $w={44} $tile="#484a4a"><AltairLogo size={21} uid="altair-task" /><Underline $w={44} /></TaskSlot>
      <Tray>
        <svg width="12" height="8" viewBox="0 0 12 8"><path d="M.5 7L6 1.500 11.500 7" fill="none" stroke="#fff" strokeWidth="1.300" /></svg>
        <svg width="34" height="16" viewBox="-10 0 34 16" fill="none" stroke="#fff"><path d="M6.500 2.500h9v8h-10V7M2.500 4.500v8h3M7 13.500h6M10.500 10.500v3M.500 1.500h4v3h-4z" /></svg>
        <svg width="18" height="16" viewBox="0 0 18 16"><path d="M1 5.500h2L6.500 1.500v12L3 9.500H1z" fill="none" stroke="#fff" /><circle cx="12.300" cy="11" r="4.500" fill="#d83030" /><path d="M10.500 9.200l3.600 3.600M14.100 9.200L10.500 12.800" stroke="#fff" strokeWidth="1.200" /></svg>
        <Clock>10:39 PM<br />9/17/2020</Clock>
        <Notifications>
          <svg width="20" height="20" viewBox="0 0 20 20"><path d="M0 1h17v13H9l-4 4v-4H0z" fill="#fff" /><path d="M3 4.500h11M3 7.500h11M3 10.500h6" stroke="#1a1e1d" /></svg>
          <NotificationCount>16</NotificationCount>
        </Notifications>
        <ShowDesktop />
      </Tray>
    </Taskbar>
  </Screen>
);

export default App;
